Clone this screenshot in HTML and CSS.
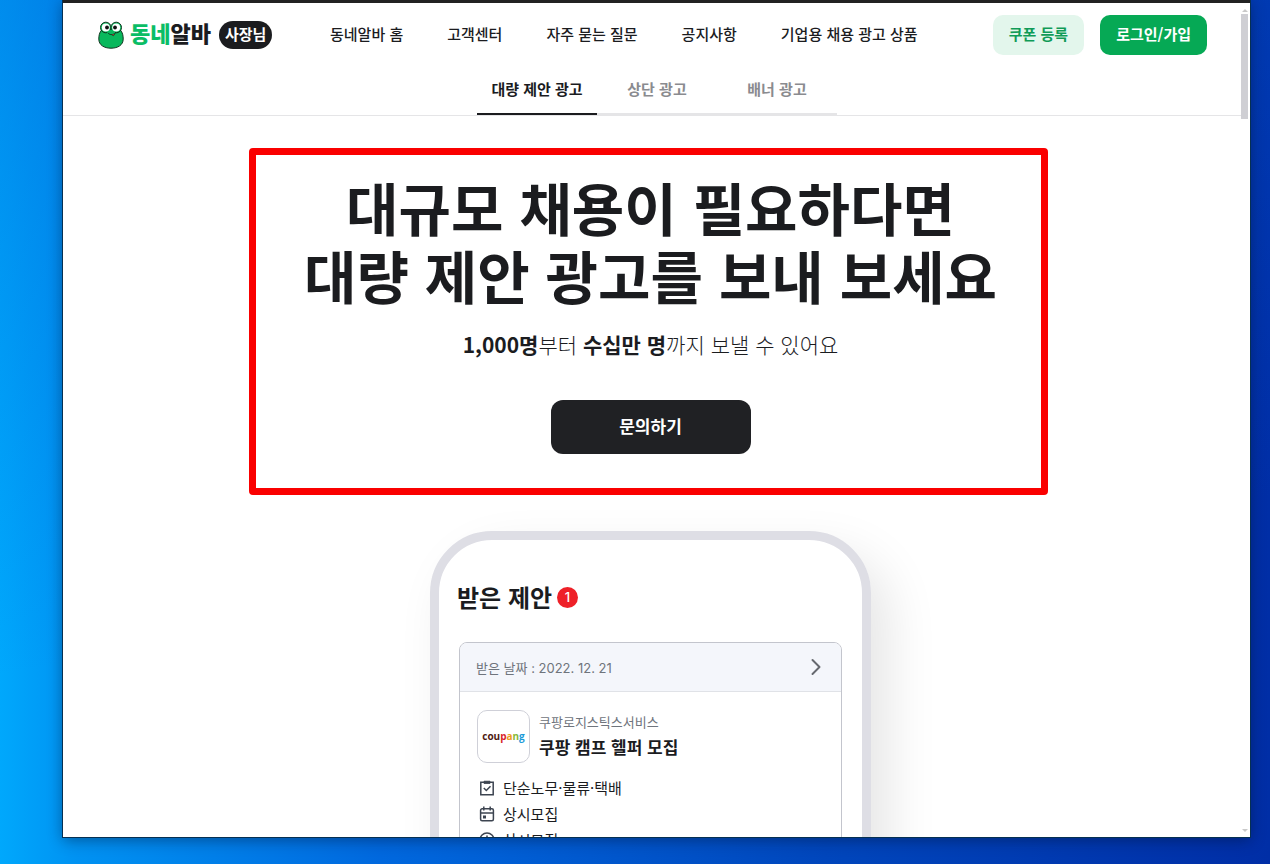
FILE: index.html
```html
<!DOCTYPE html>
<html lang="ko">
<head>
<meta charset="utf-8">
<title>동네알바 사장님</title>
<link rel="stylesheet" href="styles.css">
</head>
<body>
<div class="window">
  <div class="page">
    <header class="header">
      <div class="topbar">
        <a class="logo" href="#">
          <svg class="frog" viewBox="0 0 26 28" width="26" height="28" aria-hidden="true">
            <path d="M4 8.500C1.200 11.500.8 15 .8 18c0 6 5.200 9.200 12.200 9.200S25.200 24 25.200 18c0-3-.4-6.500-3.200-9.500z" fill="#08b85c" stroke="#10351f" stroke-width="1"/>
            <circle cx="7.800" cy="6.500" r="5.300" fill="#08b85c" stroke="#10351f"/>
            <circle cx="18.200" cy="6.500" r="5.300" fill="#08b85c" stroke="#10351f"/>
            <path d="M9 9h8v5H9z" fill="#08b85c"/>
            <circle cx="7.800" cy="6.500" r="4" fill="#fff"/>
            <circle cx="18.200" cy="6.500" r="4" fill="#fff"/>
            <circle cx="9" cy="6.500" r="1.900" fill="#111"/>
            <circle cx="17" cy="6.500" r="1.900" fill="#111"/>
            <path d="M10 12c1.500 2 4.500 2.500 7.500 0" fill="none" stroke="#10351f" stroke-linecap="round"/>
            <path d="M14 13.500c.5 1.800 2.200 1.600 2.600-.6" fill="#b9452f" stroke="#10351f" stroke-width=".7"/>
          </svg>
          <span class="wordmark"><span class="wordmark-green">동네</span>알바</span>
          <span class="badge-owner">사장님</span>
        </a>
        <nav class="nav">
          <a href="#">동네알바 홈</a>
          <a href="#">고객센터</a>
          <a href="#">자주 묻는 질문</a>
          <a href="#">공지사항</a>
          <a href="#">기업용 채용 광고 상품</a>
        </nav>
        <div class="actions">
          <button class="btn btn-light" type="button">쿠폰 등록</button>
          <button class="btn btn-green" type="button">로그인/가입</button>
        </div>
      </div>
      <nav class="tabs">
        <a class="tab tab-active" href="#">대량 제안 광고</a>
        <a class="tab" href="#">상단 광고</a>
        <a class="tab" href="#">배너 광고</a>
      </nav>
    </header>
    <main class="main">
      <section class="hero">
        <h1 class="hero-title">대규모 채용이 필요하다면<br>대량 제안 광고를 보내 보세요</h1>
        <p class="hero-sub"><b>1,000명</b>부터 <b>수십만 명</b>까지 보낼 수 있어요</p>
        <button class="cta" type="button">문의하기</button>
        <div class="highlight"></div>
      </section>
      <section class="phone">
        <h2 class="phone-title">받은 제안 <span class="count">1</span></h2>
        <article class="card">
          <div class="card-head">
            <span>받은 날짜 : 2022. 12. 21</span>
            <svg viewBox="0 0 10 18" width="10" height="18" aria-hidden="true"><path d="M1.500 2l7 7-7 7" fill="none" stroke="#66696f" stroke-width="2" stroke-linecap="round" stroke-linejoin="round"/></svg>
          </div>
          <div class="card-body">
            <div class="company">
              <div class="company-logo"><span class="c1">cou</span><span class="c2">p</span><span class="c3">a</span><span class="c4">n</span><span class="c5">g</span></div>
              <div class="company-text">
                <p class="company-name">쿠팡로지스틱스서비스</p>
                <h3 class="job-title">쿠팡 캠프 헬퍼 모집</h3>
              </div>
            </div>
            <ul class="facts">
              <li>
                <svg viewBox="0 0 16 16" width="16" height="16" aria-hidden="true"><g fill="none" stroke="#3c4450" stroke-width="1.500"><path d="M1.800 2.200h12.400v12.600H1.800z"/><path d="M5 1.200h6v2.300H5z" fill="#3c4450" stroke-width=".8"/><path d="M4.800 8l2.500 2.500 4.200-4.300"/></g></svg>
                <span>단순노무·물류·택배</span>
              </li>
              <li>
                <svg viewBox="0 0 16 16" width="16" height="16" aria-hidden="true"><g fill="none" stroke="#3c4450" stroke-width="1.500"><rect x="1.600" y="2.800" width="12.800" height="12" rx="1.500"/><path d="M1.600 7h12.800M4.800.5v4M11.200.5v4"/></g><path d="M4 9.500h3v3H4z" fill="#3c4450"/></svg>
                <span>상시모집</span>
              </li>
              <li>
                <svg viewBox="0 0 16 16" width="16" height="16" aria-hidden="true"><g fill="none" stroke="#3c4450" stroke-width="1.500"><circle cx="8" cy="8" r="7"/><path d="M8 3.500V8.500l3 2"/></g></svg>
                <span>상시모집</span>
              </li>
            </ul>
          </div>
        </article>
      </section>
    </main>
  </div>
  <div class="scrollbar" aria-hidden="true">
    <span class="arrow-up"></span>
    <span class="thumb"></span>
    <span class="arrow-down"></span>
  </div>
</div>
</body>
</html>
```
FILE: styles.css
```css
* { box-sizing: border-box; }

body {
  margin: 0;
  height: 100vh;
  padding: 0 20px 27px 63px;
  overflow: hidden;
  background:
    linear-gradient(172deg, rgba(0, 90, 210, .35) 0, rgba(0, 90, 210, 0) 65%),
    linear-gradient(90deg, #00a8fc 0, #0092f2 6%, #0068de 30%, #0046bc 65%, #002ea6 100%);
  color: #1b1c1f;
  font-family: "Noto Sans CJK KR", sans-serif;
  font-size: 15px;
}

a { color: inherit; text-decoration: none; }
h1, h2, h3, p, ul { margin: 0; padding: 0; }
button { border: 0; font-family: inherit; cursor: pointer; }

.window {
  display: flex;
  height: 100%;
  background: #fff;
  border-top: 3px solid #222;
  outline: 1px solid #063052;
  box-shadow: 0 3px 14px rgba(0, 15, 45, .45);
}

.page { flex: 1; min-width: 0; overflow: hidden; }

.header { border-bottom: 1px solid #e5e5e7; }

.topbar {
  display: flex;
  align-items: center;
  height: 64px;
  padding: 0 34px 0 35px;
}

.logo { display: flex; align-items: center; width: 232px; }
.wordmark {
  margin-left: 6px;
  padding-bottom: 6px;
  font-size: 22px;
  font-weight: 900;
  line-height: 28px;
}
.wordmark-green { color: #0bbd66; }
.badge-owner {
  height: 28px;
  margin-left: 8px;
  padding: 0 6px;
  border-radius: 14px;
  background: #1b1c1f;
  color: #fff;
  font-weight: 700;
  line-height: 26px;
}

.nav {
  display: flex;
  gap: 44px;
  padding-bottom: 4px;
  font-weight: 500;
  white-space: nowrap;
}

.actions { display: flex; gap: 16px; margin-left: auto; }
.btn {
  height: 40px;
  padding: 0 16px 4px;
  border-radius: 10px;
  font-size: 15px;
  font-weight: 700;
  white-space: nowrap;
}
.btn-light { background: #e3f6ec; color: #109b57; }
.btn-green { background: #06a955; color: #fff; }

.tabs { display: flex; justify-content: center; padding-left: 10px; }
.tab {
  width: 120px;
  height: 48px;
  border-bottom: 2px solid #e5e5e7;
  color: #8a8b8f;
  font-weight: 700;
  line-height: 44px;
  text-align: center;
}
.tab-active { border-color: #1b1c1f; color: #1b1c1f; }

.main {
  display: flex;
  flex-direction: column;
  align-items: center;
  padding-right: 3px;
}

.hero {
  position: relative;
  display: flex;
  flex-direction: column;
  align-items: center;
  width: 100%;
  padding: 56px 0 77px;
  text-align: center;
}
.hero-title { font-size: 57px; font-weight: 700; line-height: 68px; }
.hero-sub { margin-top: 21px; font-size: 21px; font-weight: 300; line-height: 30px; }
.hero-sub b { font-weight: 700; }
.cta {
  width: 200px;
  height: 54px;
  margin-top: 41px;
  padding-bottom: 4px;
  border-radius: 12px;
  background: #202124;
  color: #fff;
  font-size: 17px;
  font-weight: 700;
}
.highlight {
  position: absolute;
  top: 32px;
  bottom: 36px;
  left: calc(50% - 402px);
  width: 799px;
  border: 7px solid #fa0000;
  border-radius: 4px;
  pointer-events: none;
}

.phone {
  width: 441px;
  height: 800px;
  padding: 39px 20px;
  border: 9px solid #dedee5;
  border-radius: 62px;
  box-shadow: 18px 22px 50px rgba(0, 0, 0, .1);
}
.phone-title {
  display: flex;
  align-items: center;
  gap: 5px;
  margin-left: -2px;
  font-size: 24px;
  font-weight: 700;
  line-height: 36px;
}
.count {
  width: 21px;
  height: 21px;
  border-radius: 50%;
  background: #ee2028;
  color: #fff;
  font-family: Inter, sans-serif;
  font-size: 13px;
  font-weight: 500;
  line-height: 21px;
  text-align: center;
}

.card {
  height: 600px;
  margin-top: 27px;
  border: 1px solid #c3c5cd;
  border-radius: 8px;
  overflow: hidden;
}
.card-head {
  display: flex;
  justify-content: space-between;
  align-items: center;
  height: 49px;
  padding: 0 20px 0 16px;
  border-bottom: 1px solid #e0e2e7;
  background: #f4f6fb;
  color: #6f747c;
  font-family: Inter, "Noto Sans CJK KR", sans-serif;
  font-size: 13px;
}
.card-body { padding: 18px 17px; }
.company { display: flex; align-items: center; gap: 9px; }
.company-logo {
  width: 53px;
  height: 53px;
  border: 1px solid #cfd0d8;
  border-radius: 10px;
  font-family: "Open Sans", sans-serif;
  font-size: 10px;
  font-weight: 700;
  line-height: 50px;
  text-align: center;
}
.c1 { color: #4f1a13; }
.c2 { color: #d8232a; }
.c3 { color: #ee9a1a; }
.c4 { color: #86b835; }
.c5 { color: #1a9ad8; }
.company-text { padding-bottom: 4px; }
.company-name { color: #6f747c; font-size: 13px; line-height: 24px; }
.job-title { font-size: 17px; font-weight: 700; line-height: 25px; }

.facts { margin: 12px 0 0 2px; list-style: none; }
.facts li { display: flex; align-items: center; gap: 8px; line-height: 26px; }

.scrollbar {
  display: flex;
  flex-direction: column;
  align-items: center;
  width: 9px;
  padding: 6px 2px 5px 0;
}
.arrow-up, .arrow-down { border: 3px solid transparent; }
.arrow-up { border-top: 0; border-bottom-color: #c9c9c9; }
.arrow-down { margin-top: auto; border-bottom: 0; border-top-color: #c9c9c9; }
.thumb { width: 7px; height: 105px; margin-top: 2px; background: #cfcfd4; }
```
